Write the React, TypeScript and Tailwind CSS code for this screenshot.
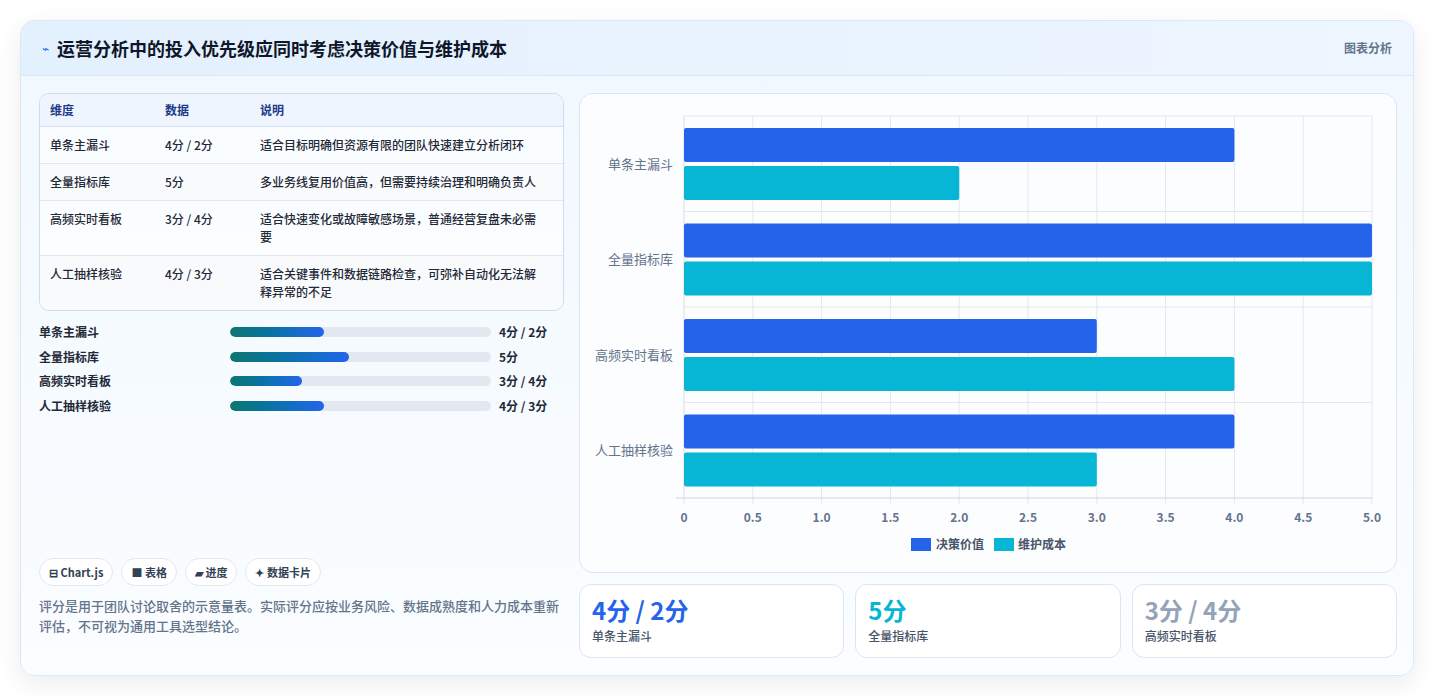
import React from "react";

const rows = [
  ["单条主漏斗", "4分 / 2分", "适合目标明确但资源有限的团队快速建立分析闭环"],
  ["全量指标库", "5分", "多业务线复用价值高，但需要持续治理和明确负责人"],
  ["高频实时看板", "3分 / 4分", "适合快速变化或故障敏感场景，普通经营复盘未必需要"],
  ["人工抽样核验", "4分 / 3分", "适合关键事件和数据链路检查，可弥补自动化无法解释异常的不足"],
];
const prog = [
  ["单条主漏斗", 36, "4分 / 2分"],
  ["全量指标库", 45.5, "5分"],
  ["高频实时看板", 27.5, "3分 / 4分"],
  ["人工抽样核验", 36, "4分 / 3分"],
] as const;
const data = [
  ["单条主漏斗", 4, 2],
  ["全量指标库", 5, 5],
  ["高频实时看板", 3, 4],
  ["人工抽样核验", 4, 3],
] as const;

function Chart() {
  const x0 = 104, w = 688, y0 = 22, rh = 95.5;
  const sx = (v: number) => x0 + (v / 5) * w;
  const ticks = [0, 0.5, 1, 1.5, 2, 2.5, 3, 3.5, 4, 4.5, 5];
  return (
    <svg width="817" height="479" className="block" style={{ fontFamily: '"Noto Sans CJK SC", sans-serif' }}>
      {ticks.map((t) => (
        <line key={t} x1={sx(t)} x2={sx(t)} y1={y0} y2={y0 + 4 * rh + 6} stroke="#e5e7eb" />
      ))}
      {[0, 1, 2, 3].map((i) => (
        <line key={i} x1={x0} x2={x0 + w} y1={y0 + rh * i} y2={y0 + rh * i} stroke="#e5e7eb" />
      ))}
      <line x1={x0} x2={x0} y1={y0} y2={y0 + 4 * rh} stroke="#e5e7eb" />
      <line x1={x0 - 8} x2={x0 + w} y1={y0 + 4 * rh} y2={y0 + 4 * rh} stroke="#cbd5e1" />
      {data.map(([l, a, b], i) => {
        const t = y0 + rh * i;
        return (
          <g key={l}>
            <rect x={x0} y={t + 12} width={sx(a) - x0} height={34} rx={2} fill="#2563eb" />
            <rect x={x0} y={t + 50} width={sx(b) - x0} height={34} rx={2} fill="#06b6d4" />
            <text x={x0 - 11} y={t + rh / 2 + 5} textAnchor="end" fontSize="13" fill="#64748b">{l}</text>
          </g>
        );
      })}
      {ticks.map((t) => (
        <text key={t} x={sx(t)} y={428} textAnchor="middle" fontSize="12" fontWeight="600" fill="#64748b">
          {t === 0 ? "0" : t.toFixed(1)}
        </text>
      ))}
      <rect x={331} y={444} width={20} height={13} fill="#2563eb" />
      <text x={356} y={455} fontSize="12" fontWeight="600" fill="#475569">决策价值</text>
      <rect x={414} y={444} width={20} height={13} fill="#06b6d4" />
      <text x={438} y={455} fontSize="12" fontWeight="600" fill="#475569">维护成本</text>
    </svg>
  );
}

export default function App() {
  return (
    <div className="w-[1435px] h-[696px] bg-white pt-[20px] pl-[20px]" style={{ fontFamily: '"Noto Sans CJK SC", "Noto Sans", sans-serif' }}>
      <div className="w-[1394px] h-[656px] rounded-[14px] border border-[#dbe8f5] shadow-[0_8px_24px_rgba(15,23,42,0.08)] overflow-hidden bg-gradient-to-b from-[#f0f8ff] to-[#fbfdff] flex flex-col">
        <div className="h-[55px] shrink-0 bg-gradient-to-r from-[#e3f0fd] to-[#eef6ff] border-b border-[#d9e8f7] flex items-center justify-between pl-[21px] pr-[21px]">
          <div className="flex items-center gap-[8px]">
            <span className="text-[#2563eb] text-[12px]">⌁</span>
            <span className="text-[18px] font-bold text-[#0f172a]">运营分析中的投入优先级应同时考虑决策价值与维护成本</span>
          </div>
          <span className="text-[12px] font-semibold text-[#64748b]">图表分析</span>
        </div>
        <div className="flex gap-[15px] pl-[18px] pt-[17px]">
          <div className="w-[525px] h-[563px] flex flex-col">
            <div className="rounded-[10px] border border-[#cfdceb] overflow-hidden bg-white/60 text-[12px]">
              <div className="flex h-[33px] items-center bg-[#eef5fe] border-b border-[#d5e1ee] text-[#1e3a8a] font-semibold">
                <div className="w-[125px] pl-[10px]">维度</div>
                <div className="w-[95px]">数据</div>
                <div>说明</div>
              </div>
              {rows.map((r, i) => (
                <div key={i} className={`flex py-[9px] text-[#1f2937] font-medium leading-[18px] ${i < 3 ? "border-b border-[#e2e8f0]" : ""} ${i % 2 === 1 ? "bg-[#f8fafc]" : ""}`}>
                  <div className="w-[125px] pl-[10px] shrink-0">{r[0]}</div>
                  <div className="w-[95px] shrink-0">{r[1]}</div>
                  <div className="w-[285px]">{r[2]}</div>
                </div>
              ))}
            </div>
            <div className="mt-[12px] flex flex-col gap-[6.5px]">
              {prog.map(([l, p, v]) => (
                <div key={l} className="flex items-center h-[18px] text-[12px] font-semibold text-[#1f2937]">
                  <div className="w-[191px]">{l}</div>
                  <div className="w-[261px] h-[10px] rounded-full bg-[#e2e8f0] overflow-hidden">
                    <div className="h-full rounded-full bg-gradient-to-r from-[#0f766e] to-[#2563eb]" style={{ width: `${p}%` }} />
                  </div>
                  <div className="ml-[8px]">{v}</div>
                </div>
              ))}
            </div>
            <div className="mt-auto">
              <div className="flex gap-[8px] text-[11px] font-semibold text-[#334155]">
                {["⊟ Chart.js", "■ 表格", "▰ 进度", "✦ 数据卡片"].map((c) => (
                  <span key={c} className="h-[28px] px-[9px] flex items-center rounded-full border border-[#e2e8f0] bg-white">{c}</span>
                ))}
              </div>
              <p className="mt-[10px] text-[13px] leading-[20px] text-[#64748b] font-medium pb-[20px]">
                评分是用于团队讨论取舍的示意量表。实际评分应按业务风险、数据成熟度和人力成本重新评估，不可视为通用工具选型结论。
              </p>
            </div>
          </div>
          <div className="w-[818px] flex flex-col gap-[11px]">
            <div className="h-[480px] rounded-[14px] border border-[#dbe6f2] bg-[#fbfdff]">
              <Chart />
            </div>
            <div className="flex gap-[11px]">
              {[
                ["4分 / 2分", "text-[#2563eb]", "单条主漏斗"],
                ["5分", "text-[#06b6d4]", "全量指标库"],
                ["3分 / 4分", "text-[#94a3b8]", "高频实时看板"],
              ].map(([v, c, l]) => (
                <div key={l} className="flex-1 h-[74px] rounded-[12px] border border-[#dbe6f2] bg-white px-[12px] pt-[10px]">
                  <div className={`text-[24px] font-bold leading-[30px] ${c}`}>{v}</div>
                  <div className="text-[12px] text-[#475569] font-medium mt-[2px]">{l}</div>
                </div>
              ))}
            </div>
          </div>
        </div>
      </div>
    </div>
  );
}
